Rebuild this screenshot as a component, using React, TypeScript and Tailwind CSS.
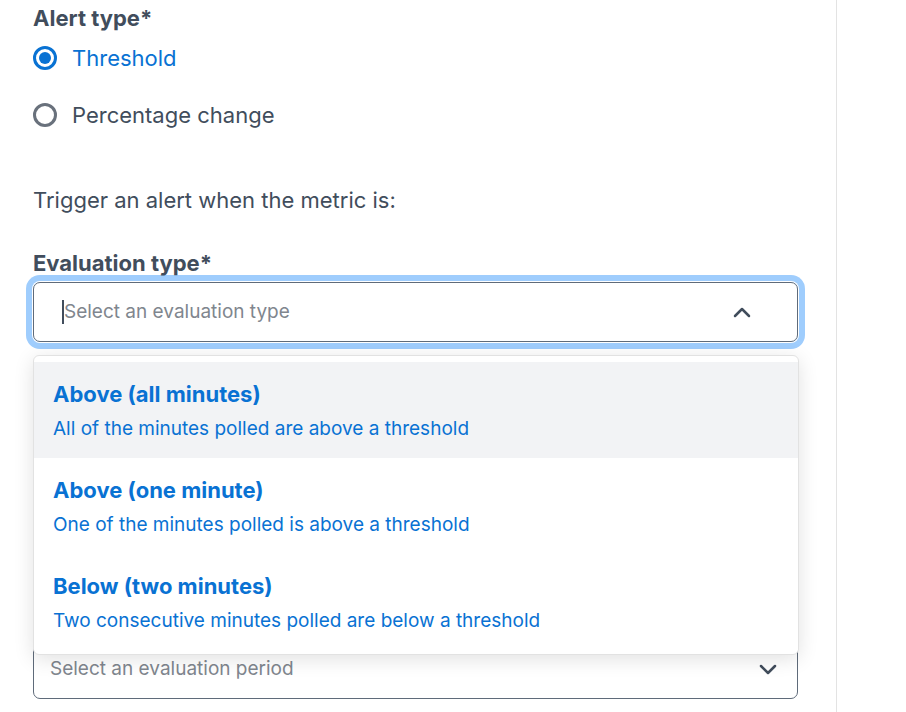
import React from "react";

const font = { fontFamily: "Inter, 'Noto Sans', sans-serif" };

function ChevronUp() {
  return (
    <svg width="18" height="12" viewBox="0 0 18 12" fill="none">
      <path d="M2 10 L9 3 L16 10" stroke="#414d5c" strokeWidth="2.5" strokeLinecap="round" strokeLinejoin="round" />
    </svg>
  );
}
function ChevronDown() {
  return (
    <svg width="18" height="12" viewBox="0 0 18 12" fill="none">
      <path d="M2 3 L9 10 L16 3" stroke="#414d5c" strokeWidth="2.5" strokeLinecap="round" strokeLinejoin="round" />
    </svg>
  );
}

const options = [
  { title: "Above (all minutes)", desc: "All of the minutes polled are above a threshold" },
  { title: "Above (one minute)", desc: "One of the minutes polled is above a threshold" },
  { title: "Below (two minutes)", desc: "Two consecutive minutes polled are below a threshold" },
];

export default function App() {
  return (
    <div className="w-[906px] h-[712px] overflow-hidden bg-white flex" style={font}>
      <div className="w-[837px] border-r border-[#e3e3e3] pl-[33px] pr-[38px] relative">
        <div className="text-[22px] leading-[26px] font-bold text-[#414d5c] pt-[5px]">Alert type*</div>
        <div className="mt-[15px] flex items-center h-[24px]">
          <span className="w-[24px] h-[24px] rounded-full border-[3px] border-[#0972d3] flex items-center justify-center">
            <span className="w-[12px] h-[12px] rounded-full bg-[#0972d3]" />
          </span>
          <span className="ml-[15px] text-[22px] leading-[24px] text-[#0972d3]">Threshold</span>
        </div>
        <div className="mt-[33px] flex items-center h-[24px]">
          <span className="w-[24px] h-[24px] rounded-full border-[3px] border-[#69717c]" />
          <span className="ml-[15px] text-[22px] leading-[24px] text-[#414d5c]">Percentage change</span>
        </div>
        <div className="mt-[61px] text-[22px] leading-[24px] text-[#414d5c]">Trigger an alert when the metric is:</div>
        <div className="mt-[39px] text-[22px] leading-[24px] font-bold text-[#414d5c]">Evaluation type*</div>
        <div className="mt-[7px] h-[60px] rounded-[7px] border border-[#5f6b7a] shadow-[0_0_0_1px_#ffffff,0_0_0_7px_#9fcdfd] flex items-center pl-[28px] pr-[46px]">
          <span className="w-[2px] h-[24px] bg-[#414d5c]" />
          <span className="flex-1 text-[19px] text-[#80868e]">Select an evaluation type</span>
          <ChevronUp />
        </div>
        <div className="mt-[297px] h-[60px] rounded-[7px] border border-[#5f6b7a] flex items-center pl-[16px] pr-[20px]">
          <span className="flex-1 text-[19px] text-[#80868e]">Select an evaluation period</span>
          <ChevronDown />
        </div>

        <div className="absolute left-[33px] top-[355px] w-[766px] bg-white border border-[#e2e2e2] rounded-[6px] shadow-[0_4px_20px_rgba(0,0,0,0.12)] pt-[6px] pb-[4px]">
          {options.map((o, i) => (
            <div key={i} className={"h-[96px] px-[19px] pt-[19px] flex flex-col " + (i === 0 ? "bg-[#f2f3f5]" : "bg-white")}>
              <div className="text-[22px] leading-[26px] font-bold text-[#0972d3]">{o.title}</div>
              <div className="mt-[11px] text-[19px] leading-[22px] text-[#0972d3]">{o.desc}</div>
            </div>
          ))}
        </div>
      </div>
      <div className="flex-1" />
    </div>
  );
}
